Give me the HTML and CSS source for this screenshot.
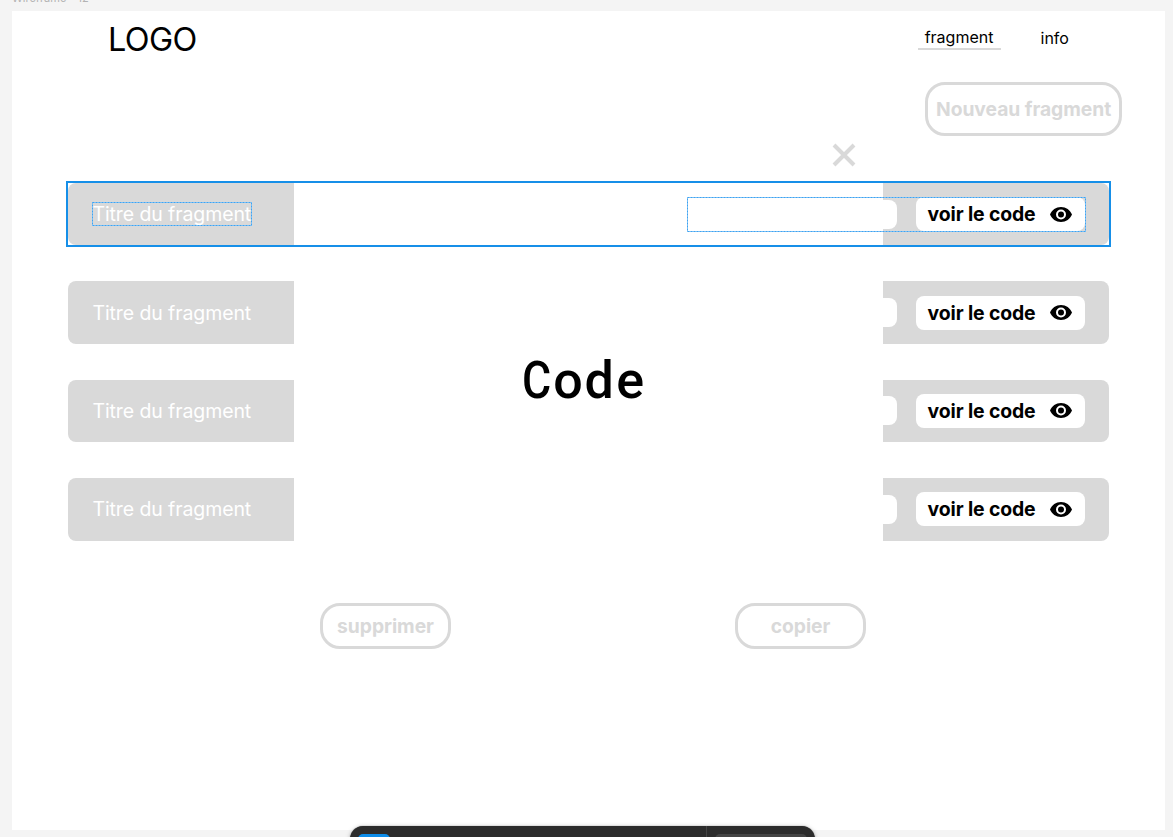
FILE: index.html
```
<!DOCTYPE html>
<html lang="fr">
<head>
<meta charset="utf-8">
<title>Fragments</title>
<link rel="stylesheet" href="styles.css">
</head>
<body>
<svg width="0" height="0" class="defs"><symbol id="eye" viewBox="0 0 22 15"><path fill-rule="evenodd" d="M11 0C6 0 1.800 3.100 0 7.500 1.800 11.900 6 15 11 15s9.200-3.100 11-7.500C20.200 3.100 16 0 11 0Zm0 12.500a5 5 0 1 1 0-10 5 5 0 0 1 0 10Zm0-2a3 3 0 1 0 0-6 3 3 0 0 0 0 6Z"/></symbol></svg>
<div class="frame-label">Wireframe - 12</div>
<main class="artboard">
  <header class="header">
    <div class="logo">LOGO</div>
    <nav class="nav"><a class="active">fragment</a><a class="info">info</a></nav>
  </header>
  <div class="actions"><button class="outline new">Nouveau fragment</button></div>
  <section class="list">
    <article class="row"><span class="title">Titre du fragment</span><div class="tools"><span class="blank"></span><button class="view"><span>voir le code</span><svg class="eye"><use href="#eye"/></svg></button></div></article>
    <article class="row"><span class="title">Titre du fragment</span><div class="tools"><span class="blank"></span><button class="view"><span>voir le code</span><svg class="eye"><use href="#eye"/></svg></button></div></article>
    <article class="row"><span class="title">Titre du fragment</span><div class="tools"><span class="blank"></span><button class="view"><span>voir le code</span><svg class="eye"><use href="#eye"/></svg></button></div></article>
    <article class="row"><span class="title">Titre du fragment</span><div class="tools"><span class="blank"></span><button class="view"><span>voir le code</span><svg class="eye"><use href="#eye"/></svg></button></div></article>
  </section>
</main>
<section class="modal">
  <svg class="close" viewBox="0 0 24 24"><path d="M2 2 22 22M22 2 2 22"/></svg>
  <div class="code"><span class="cap">C</span><span>o</span><span>d</span><span>e</span></div>
  <div class="buttons"><button class="outline">supprimer</button><button class="outline">copier</button></div>
</section>
<div class="selection"></div>
<svg class="dots dots-title" viewBox="0 0 160 24"><rect class="halo" x=".5" y=".5" width="159" height="23"/><rect x=".5" y=".5" width="159" height="23"/></svg>
<svg class="dots dots-tools" viewBox="0 0 399 35"><rect class="halo" x=".5" y=".5" width="398" height="34"/><rect x=".5" y=".5" width="398" height="34"/></svg>
<div class="toolbar"><div class="tool-active"></div><div class="divider"></div><div class="modes"></div></div>
</body>
</html>
```
FILE: styles.css
```
* { box-sizing: border-box; }
body { margin: 0; height: 837px; overflow: hidden; position: relative; background: #f4f4f4; font-family: Inter, sans-serif; color: #000; }
button { font-family: inherit; margin: 0; padding: 0; }
.defs { position: absolute; }
.frame-label { height: 20px; margin: -9px 0 0 12px; font-size: 11px; line-height: 14px; color: #b3b3b3; }
.artboard { width: 1152.300px; height: 819px; margin-left: 12.300px; background: #fff; }
.header { display: flex; justify-content: space-between; height: 71px; padding: 8px 95.700px 0 95.700px; }
.logo { font-size: 32.400px; line-height: 41px; letter-spacing: -.6px; }
.nav { display: flex; gap: 40px; font-size: 16px; line-height: 20px; }
.active { width: 83px; height: 31px; padding-top: 7.500px; text-align: center; border-bottom: 2px solid #d9d9d9; }
.info { padding-top: 9px; }
.actions { display: flex; justify-content: flex-end; padding-right: 42.500px; height: 101px; }
.outline { width: 131px; height: 46px; border: 3px solid #d9d9d9; border-radius: 20px; background: #fff; color: #d9d9d9; font-size: 19.300px; font-weight: 700; letter-spacing: -.05px; white-space: nowrap; }
.new { width: 197px; height: 54px; }
.list { display: flex; flex-direction: column; gap: 36px; padding: 0 55.300px 0 56px; }
.row { display: flex; align-items: center; justify-content: space-between; height: 62.400px; padding: 0 24.200px; border-radius: 8px; background: #d9d9d9; }
.title { color: #fff; font-size: 19.500px; line-height: 24px; letter-spacing: -.1px; }
.tools { display: flex; align-items: center; gap: 18.500px; }
.blank { width: 210px; height: 29px; border-radius: 8px; background: #fff; }
.view { display: flex; align-items: center; justify-content: space-between; width: 169.500px; height: 34px; padding: 0 13px 0 12px; border: 0; border-radius: 8px; background: #fff; color: #000; font-size: 19.400px; font-weight: 700; letter-spacing: -.12px; white-space: nowrap; }
.eye { width: 22px; height: 15px; }
.modal { position: absolute; left: 294px; top: 138px; width: 589px; height: 530px; display: flex; flex-direction: column; background: #fff; }
.close { align-self: flex-end; width: 24px; height: 24px; margin: 5px 27px 0 0; fill: none; stroke: #d9d9d9; stroke-width: 4; }
.code { display: flex; justify-content: center; flex: 1; padding: 183px 0 0; margin-left: -10px; font: 500 52px/62px Roboto, sans-serif; }
.code span { width: 31.100px; display: flex; justify-content: center; }
.code .cap { transform: scaleX(.86); }
.buttons { display: flex; justify-content: space-between; padding: 0 17px 19px 26px; }
.selection { position: absolute; left: 66px; top: 181px; width: 1045px; height: 66px; border: 2px solid #168fe8; }
.dots { position: absolute; overflow: visible; fill: none; stroke: #3fa2f0; stroke-dasharray: 2 1; }
.dots .halo { stroke: #a9d8fa; stroke-dasharray: none; }
.dots-title { left: 92px; top: 202px; width: 160px; height: 24px; }
.dots-tools { left: 687px; top: 197px; width: 399px; height: 35px; }
.toolbar { position: absolute; left: 350px; top: 826px; width: 465px; height: 48px; display: flex; padding: 8px 8px 0; border-radius: 13px; background: #2c2c2c; box-shadow: 0 0 1px #0008, 0 1px 5px #0004; }
.tool-active { width: 32px; height: 32px; border-radius: 5px; background: #0c8ce9; }
.divider { width: 1px; height: 48px; margin: -8px 8px 0 316px; background: #444; }
.modes { width: 92px; height: 32px; border-radius: 5px; background: #444; }
```
